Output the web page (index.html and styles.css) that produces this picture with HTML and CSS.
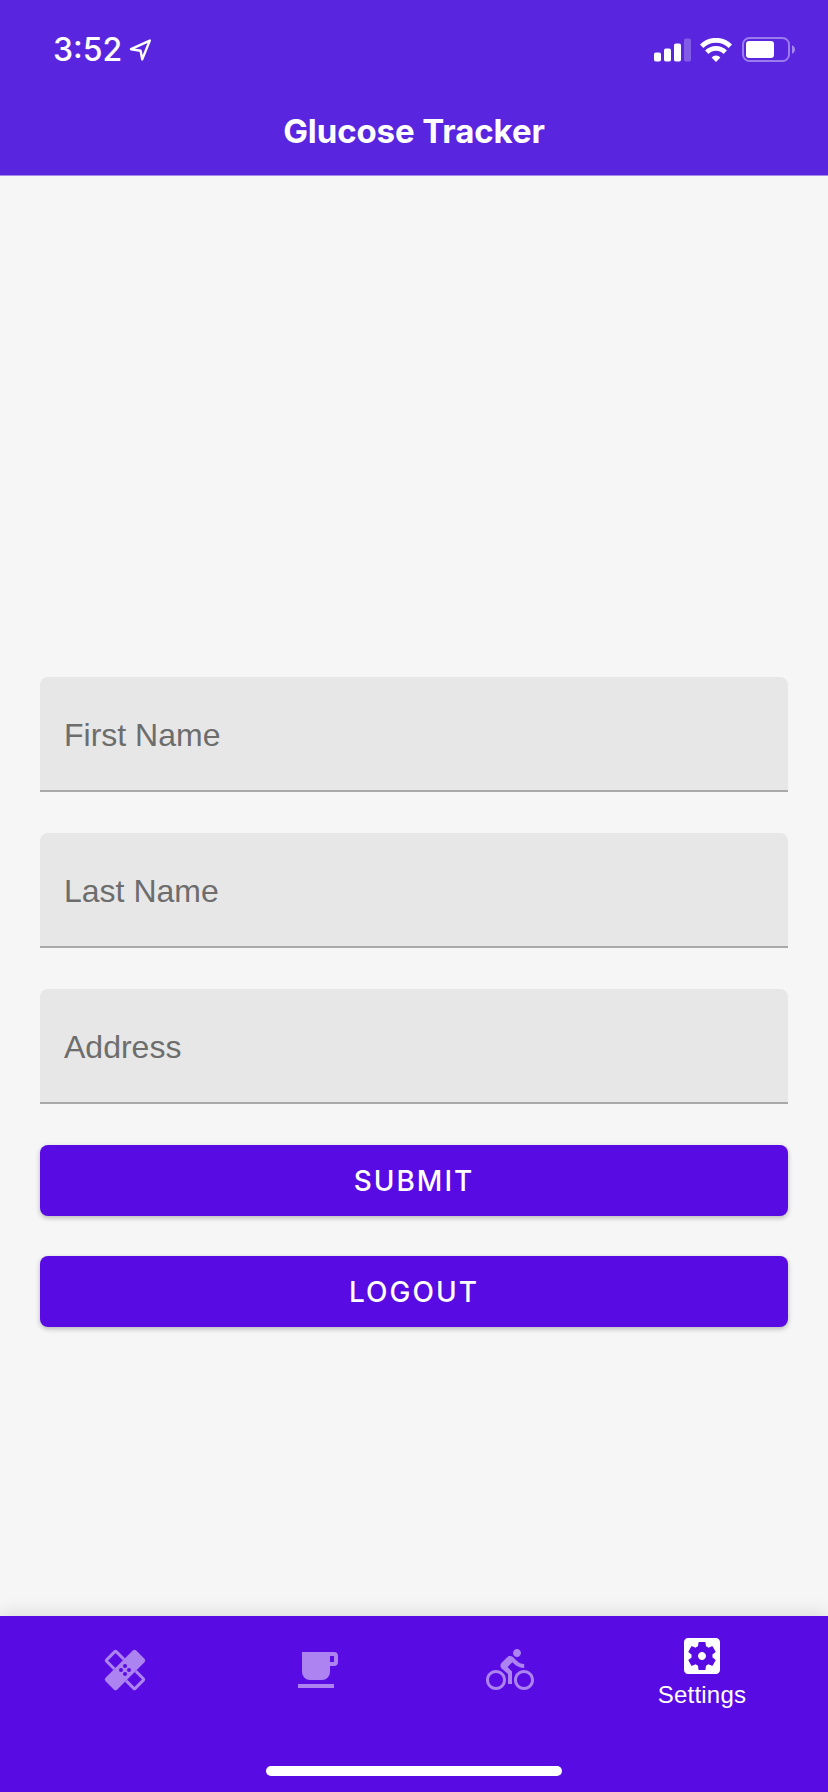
FILE: index.html
```html
<!DOCTYPE html>
<html lang="en">
<head>
<meta charset="utf-8">
<title>Glucose Tracker</title>
<link rel="stylesheet" href="styles.css">
</head>
<body>
<div class="app">
  <header class="header">
    <div class="status">
      <div class="status-left">
        <span class="time">3:52</span>
        <svg class="location" width="24" height="24" viewBox="0 0 24 24"><path d="M2 11.2 20.8 2.6 13.2 21.4 11.6 12.8Z" fill="none" stroke="#fff" stroke-width="2.4" stroke-linejoin="round"/></svg>
      </div>
      <div class="status-right">
        <svg width="38" height="24" viewBox="0 0 38 24" fill="#fff"><rect x="0" y="14.5" width="7" height="9" rx="1.8"/><rect x="10" y="10.5" width="7" height="13" rx="1.8"/><rect x="20" y="5.5" width="7" height="18" rx="1.8"/><rect x="30" y=".5" width="7" height="23" rx="1.8" opacity=".25"/></svg>
        <svg class="wifi" width="32" height="24" viewBox="0 0 32 24"><g fill="none" stroke="#fff" stroke-width="4.8"><path d="M1.6 8.2a20.4 20.4 0 0 1 28.8 0"/><path d="M6.8 14.2a13 13 0 0 1 18.4 0"/></g><path d="M16 24l-4.4-4.6a6.3 6.3 0 0 1 8.8 0z" fill="#fff"/></svg>
        <svg class="battery" width="54" height="26" viewBox="0 0 54 26"><rect x="1" y="1" width="46" height="23" rx="6.5" fill="none" stroke="#fff" stroke-opacity=".4" stroke-width="2"/><rect x="4" y="4" width="28" height="17" rx="3.2" fill="#fff"/><path d="M50 8.3c4 1.5 4 7 0 8.5z" fill="#fff" opacity=".45"/></svg>
      </div>
    </div>
    <h1 class="title">Glucose Tracker</h1>
  </header>
  <main class="form">
    <label class="field">First Name</label>
    <label class="field">Last Name</label>
    <label class="field">Address</label>
    <button class="button">SUBMIT</button>
    <button class="button">LOGOUT</button>
  </main>
  <nav class="nav">
    <div class="tabs">
      <a class="tab">
        <svg class="icon" viewBox="0 0 48 48">
          <defs><mask id="arms"><path fill="#fff" d="M0 0h48v48H0z"/><rect x="2.3" y="15.7" width="43.4" height="16.6" fill="#000" transform="rotate(-45 24 24)"/></mask>
          <mask id="dots"><path fill="#fff" d="M0 0h48v48H0z"/><circle cx="24" cy="20" r="2"/><circle cx="24" cy="28" r="2"/><circle cx="20" cy="24" r="2"/><circle cx="28" cy="24" r="2"/></mask></defs>
          <g mask="url(#arms)"><rect x="3.8" y="17.2" width="40.4" height="13.6" rx="1" fill="none" stroke="currentColor" stroke-width="3" transform="rotate(45 24 24)"/></g>
          <g mask="url(#dots)"><rect x="2.3" y="15.7" width="43.4" height="16.6" rx="2.5" fill="currentColor" transform="rotate(-45 24 24)"/></g>
        </svg>
      </a>
      <a class="tab">
        <svg class="icon" viewBox="0 0 24 24"><path fill="currentColor" d="M2 21h18v-2H2M20 8h-2V5h2m0-2H4v10a4 4 0 0 0 4 4h6a4 4 0 0 0 4-4v-3h2a2 2 0 0 0 2-2V5a2 2 0 0 0-2-2z"/></svg>
      </a>
      <a class="tab">
        <svg class="icon" viewBox="0 0 24 24"><path fill="currentColor" d="M15.5 5.5c1.1 0 2-.9 2-2s-.9-2-2-2-2 .9-2 2 .9 2 2 2zM5 12c-2.8 0-5 2.2-5 5s2.2 5 5 5 5-2.2 5-5-2.2-5-5-5zm0 8.5c-1.9 0-3.5-1.6-3.5-3.5s1.6-3.5 3.5-3.5 3.5 1.6 3.5 3.5-1.6 3.5-3.5 3.5zm5.8-10l2.4-2.4.8.8c1.3 1.3 3 2.1 5.1 2.1V9c-1.5 0-2.7-.6-3.6-1.5l-1.9-1.9c-.5-.4-1-.6-1.6-.6s-1.1.2-1.4.6L7.8 8.4c-.4.4-.6.9-.6 1.4 0 .6.2 1.1.6 1.4L11 14v5h2v-6.2l-2.2-2.3zM19 12c-2.8 0-5 2.2-5 5s2.2 5 5 5 5-2.2 5-5-2.2-5-5-5zm0 8.5c-1.9 0-3.5-1.6-3.5-3.5s1.6-3.5 3.5-3.5 3.5 1.6 3.5 3.5-1.6 3.5-3.5 3.5z"/></svg>
      </a>
      <a class="tab tab-active">
        <svg class="icon" viewBox="0 0 24 24"><path fill="currentColor" d="M12 10c-1.1 0-2 .9-2 2s.9 2 2 2 2-.9 2-2-.9-2-2-2zm7-7H5c-1.11 0-2 .9-2 2v14c0 1.1.89 2 2 2h14c1.11 0 2-.9 2-2V5c0-1.1-.89-2-2-2zm-1.75 9c0 .23-.02.46-.05.68l1.48 1.16c.13.11.17.3.08.45l-1.4 2.42c-.09.15-.27.21-.43.15l-1.74-.7c-.36.28-.76.51-1.18.69l-.26 1.85c-.03.17-.18.3-.35.3h-2.8c-.17 0-.32-.13-.35-.29l-.26-1.85c-.43-.18-.82-.41-1.18-.69l-1.74.7c-.16.06-.34 0-.43-.15l-1.4-2.42c-.09-.15-.05-.34.08-.45l1.48-1.16c-.03-.23-.05-.46-.05-.69 0-.23.02-.46.05-.68l-1.48-1.16c-.13-.11-.17-.3-.08-.45l1.4-2.42c.09-.15.27-.21.43-.15l1.74.7c.36-.28.76-.51 1.18-.69l.26-1.85c.03-.17.18-.3.35-.3h2.8c.17 0 .32.13.35.29l.26 1.85c.43.18.82.41 1.18.69l1.74-.7c.16-.06.34 0 .43.15l1.4 2.42c.09.15.05.34-.08.45l-1.48 1.16c.03.23.05.46.05.69z"/></svg>
        <span class="tab-label">Settings</span>
      </a>
    </div>
    <div class="home-bar"></div>
  </nav>
</div>
</body>
</html>
```
FILE: styles.css
```css
* {
  box-sizing: border-box;
}

body {
  margin: 0;
  font-family: "Liberation Sans", Arial, sans-serif;
  background: #f6f6f6;
}

.app {
  display: flex;
  flex-direction: column;
  height: 1792px;
  overflow: hidden;
}

.header {
  height: 176px;
  background: #5925df;
  border-bottom: 1px solid #a68be9;
  color: #fff;
  font-family: Inter, sans-serif;
}

.status {
  display: flex;
  justify-content: space-between;
  height: 88px;
  padding: 30px 32px 0 53px;
}

.status-left,
.status-right {
  display: flex;
  align-items: center;
  height: 40px;
}

.time {
  font-size: 32px;
  font-weight: 550;
  line-height: 40px;
}

.location {
  margin-left: 7px;
}

.wifi {
  margin-left: 8px;
}

.battery {
  margin-left: 10px;
}

.title {
  margin: 0;
  font-size: 33px;
  font-weight: 700;
  letter-spacing: -0.1px;
  line-height: 86px;
  text-align: center;
}

.form {
  flex: 1;
  display: flex;
  flex-direction: column;
  padding: 501px 40px 0;
}

.field {
  height: 115px;
  margin-bottom: 41px;
  padding-left: 24px;
  border-bottom: 2px solid #a9a9a9;
  border-radius: 8px 8px 0 0;
  background: #e7e7e7;
  color: #6d6d6d;
  font-size: 32px;
  line-height: 116px;
}

.button {
  height: 71px;
  margin: 0 0 40px;
  padding: 1px 0 0;
  border: 0;
  border-radius: 8px;
  background: #580be3;
  box-shadow: 0 2px 5px rgba(0, 0, 0, .25);
  color: #fff;
  font-family: Inter, sans-serif;
  font-size: 28px;
  font-weight: 500;
  letter-spacing: 2px;
}

.nav {
  display: flex;
  flex-direction: column;
  justify-content: space-between;
  align-items: center;
  height: 176px;
  padding-bottom: 16px;
  background: #580be3;
  box-shadow: 0 -4px 16px rgba(0, 0, 0, .1);
}

.tabs {
  display: grid;
  grid-template-columns: repeat(4, 192px);
  width: 768px;
  height: 108px;
}

.tab {
  display: flex;
  flex-direction: column;
  align-items: center;
  justify-content: center;
  color: #ac83f1;
}

.tab-active {
  justify-content: flex-start;
  padding-top: 16px;
  color: #fff;
}

.icon {
  display: block;
  width: 48px;
  height: 48px;
}

.tab:first-child .icon {
  margin-right: 2px;
}

.tab-label {
  font-size: 24px;
  letter-spacing: 0.2px;
  line-height: 30px;
}

.home-bar {
  width: 296px;
  height: 10px;
  border-radius: 5px;
  background: #fff;
}
```
